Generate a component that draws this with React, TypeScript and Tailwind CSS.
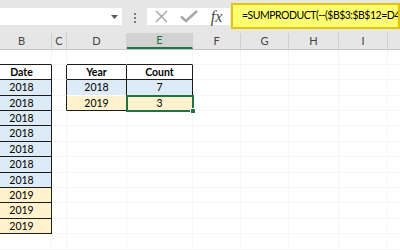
import React from "react";

type Cell = { t?: string; bold?: boolean; bg?: string; r?: string; b?: string };

const widths = ["w-[60px]", "w-[15px]", "w-[60px]", "w-[66px]", "w-[48px]", "w-[48px]", "w-[50px]", "w-[49px]", "w-[20px]"];
const labels = ["B", "C", "D", "E", "F", "G", "H", "I", ""];

const BLUE = "bg-[#ddebf7]";
const ORANGE = "bg-[#fff2cc]";
const BR = "border-r-[#1a1a1a]";
const BB = "border-b-[#1a1a1a]";

type Row = { h: string; cells: Record<number, Cell> };

const rows: Row[] = [
  { h: "h-[15px]", cells: { 0: { b: BB }, 2: { b: BB }, 3: { b: BB } } },
  {
    h: "h-[15px]",
    cells: {
      0: { t: "Date", bold: true, r: BR, b: BB },
      1: { r: BR },
      2: { t: "Year", bold: true, r: BR, b: BB },
      3: { t: "Count", bold: true, r: BR, b: BB },
    },
  },
  {
    h: "h-[16px]",
    cells: {
      0: { t: "2018", bg: BLUE, r: BR, b: BB },
      1: { r: BR },
      2: { t: "2018", bg: BLUE, r: BR, b: "border-b-white" },
      3: { t: "7", bg: BLUE, r: BR, b: "border-b-white" },
    },
  },
  {
    h: "h-[15px]",
    cells: {
      0: { t: "2018", bg: BLUE, r: BR, b: BB },
      1: { r: BR },
      2: { t: "2019", bg: ORANGE, r: BR, b: BB },
      3: { t: "3", bg: ORANGE, r: BR, b: BB },
    },
  },
  { h: "h-[15px]", cells: { 0: { t: "2018", bg: BLUE, r: BR, b: BB } } },
  { h: "h-[16px]", cells: { 0: { t: "2018", bg: BLUE, r: BR, b: BB } } },
  { h: "h-[15px]", cells: { 0: { t: "2018", bg: BLUE, r: BR, b: BB } } },
  { h: "h-[16px]", cells: { 0: { t: "2018", bg: BLUE, r: BR, b: BB } } },
  { h: "h-[15px]", cells: { 0: { t: "2018", bg: BLUE, r: BR, b: BB } } },
  { h: "h-[15px]", cells: { 0: { t: "2019", bg: ORANGE, r: BR, b: BB } } },
  { h: "h-[16px]", cells: { 0: { t: "2019", bg: ORANGE, r: BR, b: BB } } },
  { h: "h-[15px]", cells: { 0: { t: "2019", bg: ORANGE, r: BR, b: BB } } },
  { h: "h-[16px]", cells: {} },
];

export default function App() {
  return (
    <div
      className="w-[400px] h-[250px] overflow-hidden bg-white relative"
      style={{ fontFamily: "Lato, 'Liberation Sans', sans-serif" }}
    >
      {/* formula bar */}
      <div className="h-[33px] bg-[#e6e6e6] flex items-start">
        <div className="mt-[8px] w-[122px] h-[17px] bg-white flex items-center justify-end pr-[4px]">
          <svg width="7" height="4" viewBox="0 0 7 4">
            <polygon points="0,0 7,0 3.5,4" fill="#5a5a5a" />
          </svg>
        </div>
        <div className="mt-[13px] w-[25px] flex flex-col items-center gap-[2px]">
          <div className="w-[2px] h-[2px] bg-[#7a7a7a]" />
          <div className="w-[2px] h-[2px] bg-[#7a7a7a]" />
          <div className="w-[2px] h-[2px] bg-[#7a7a7a]" />
        </div>
        <div className="mt-[8px] w-[83px] h-[17px] bg-white flex items-center">
          <div className="w-[28px] flex justify-center">
            <svg width="13" height="13" viewBox="0 0 13 13">
              <path d="M1 1 L12 12 M12 1 L1 12" stroke="#a3a3a3" strokeWidth="1.4" />
            </svg>
          </div>
          <div className="w-[28px] flex justify-center">
            <svg width="18" height="13" viewBox="0 0 18 13">
              <path d="M1 6.5 L6 11 L17 1" stroke="#a9a9a9" strokeWidth="2.6" fill="none" />
            </svg>
          </div>
          <div
            className="w-[27px] flex justify-center italic text-[16px] leading-none text-[#4a4a4a]"
            style={{ fontFamily: "'Liberation Serif', serif" }}
          >
            fx
          </div>
        </div>
        <div className="ml-[1px] mt-[3px] flex-1 min-w-0 h-[26px] border-2 border-[#e3c400] bg-[#ffff70] flex items-center pl-[9px] text-[10.5px] tracking-[-0.5px] text-black whitespace-nowrap overflow-hidden">
          =SUMPRODUCT(--($B$3:$B$12=D4
        </div>
      </div>

      <div className="-ml-[8px]">
        {/* column headers */}
        <div className="h-[17px] flex bg-[#e6e6e6] border-b border-b-[#c6c6c6]">
          {labels.map((l, i) => (
            <div
              key={i}
              className={`${widths[i]} shrink-0 h-full flex items-center justify-center text-[11px] border-r border-r-[#d0d0d0] ${
                i === 3 ? "bg-[#d2d2d2] text-[#217346] border-b-2 border-b-[#217346]" : "text-[#444444]"
              }`}
            >
              {l}
            </div>
          ))}
        </div>

        {/* body */}
        <div className="relative">
          {rows.map((row, ri) => (
            <div key={ri} className={`${row.h} flex`}>
              {widths.map((w, ci) => {
                const c = row.cells[ci] || {};
                return (
                  <div
                    key={ci}
                    className={`${w} shrink-0 h-full flex items-center justify-center text-[10.5px] leading-none text-black border-r border-b ${
                      c.r ?? "border-r-[#f6f6f6]"
                    } ${c.b ?? "border-b-[#f6f6f6]"} ${c.bg ?? ""} ${c.bold ? "font-bold" : ""}`}
                  >
                    {c.t}
                  </div>
                );
              })}
            </div>
          ))}
          {/* selection */}
          <div className="absolute left-[134px] top-[45px] w-[68px] h-[17px] border-2 border-[#217346]" />
          <div className="absolute left-[198px] top-[58px] w-[6px] h-[6px] bg-[#217346] border border-white" />
        </div>
      </div>
    </div>
  );
}
